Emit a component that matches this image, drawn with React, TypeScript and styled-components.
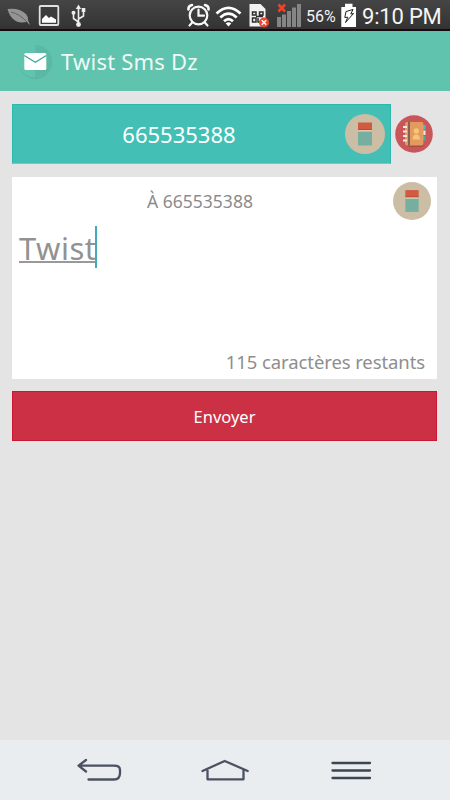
import React from "react";
import styled, { createGlobalStyle } from "styled-components";

const Global = createGlobalStyle`
  * { box-sizing: border-box; }
  body { margin: 0; background: #e4e4e4; font-family: "Noto Sans", sans-serif; }
  svg { display: block; flex: none; }
`;

const Screen = styled.div`
  width: 450px;
  height: 800px;
  display: flex;
  flex-direction: column;
  background: #e4e4e4;
  overflow: hidden;
`;

const Text = styled.span<{ $size: number; $color: string; $spacing?: number; $font?: string }>`
  font-family: ${(p) => p.$font ?? '"Noto Sans"'}, sans-serif;
  font-size: ${(p) => p.$size}px;
  line-height: 1.2;
  color: ${(p) => p.$color};
  letter-spacing: ${(p) => p.$spacing ?? 0}px;
  white-space: nowrap;
`;

const StatusBar = styled.header`
  height: 31px;
  flex: none;
  display: flex;
  align-items: center;
  background: linear-gradient(#454545, #333 94%, #160c0f 95%);
`;

const Notifications = styled.div`
  width: 187px;
  flex: none;
`;

const Clock = styled.div`
  margin-left: 6px;
  padding-top: 3px;
  display: flex;
`;

const Percent = styled.div`
  width: 35px;
  padding-top: 2px;
  display: flex;
`;

const AppBar = styled.div`
  height: 60px;
  flex: none;
  display: flex;
  align-items: center;
  padding: 1px 0 0 17px;
  gap: 8px;
  background: #60c3ae;
`;

const Content = styled.main`
  flex: 1;
  padding: 13px 13px 0 12px;
  display: flex;
  flex-direction: column;
`;

const RecipientRow = styled.div`
  display: flex;
  align-items: center;
  gap: 4.3px;
`;

const Recipient = styled.div`
  width: 379px;
  height: 60px;
  display: grid;
  grid-template-columns: 1fr 40px;
  align-items: center;
  padding: 0 5px 0 0;
  background: #43bfb5;
  border: 1px solid #2bb9ae;
  border-bottom-color: #71cac3;
`;

const Centered = styled.div<{ $right?: number; $top?: number }>`
  display: flex;
  justify-content: center;
  padding-right: ${(p) => p.$right ?? 0}px;
  padding-top: ${(p) => p.$top ?? 0}px;
`;

const Message = styled.section`
  height: 202px;
  margin-top: 12.5px;
  padding: 5px 6px 5px 7px;
  display: flex;
  flex-direction: column;
  background: #fff;
`;

const MessageHead = styled.div`
  display: grid;
  grid-template-columns: 1fr 38px;
  align-items: center;
  height: 38px;
`;

const Editor = styled.div`
  flex: 1;
  display: flex;
  align-items: flex-start;
  padding-top: 6px;
`;

const Draft = styled.div`
  height: 37px;
  width: 76px;
  display: flex;
  align-items: center;
  padding-top: 11px;
  border-bottom: 2px solid #999;
`;

const Caret = styled.div`
  width: 2px;
  height: 42px;
  background: #45a9bd;
`;

const Counter = styled.div`
  display: flex;
  justify-content: flex-end;
  padding-right: 6px;
`;

const Send = styled.button`
  height: 50px;
  margin: 12.5px 0 0;
  padding: 2px 0 0;
  border: 1px solid #cc1733;
  background: #cc3044;
`;

const NavBar = styled.nav`
  height: 60px;
  flex: none;
  background: #e9edf0;
`;

const NotificationIcons = () => (
  <svg width="187" height="31" viewBox="0 0 187 31">
    <path d="M7.500 9 Q19 7.500 26 14 Q28.500 17 28 20 L30 25 L26.500 22 Q12 25 7.500 9Z" fill="#949494" />
    <path d="M11 12 Q20 14 28 23" stroke="#555" fill="none" strokeWidth=".8" />
    <rect x="39.700" y="6" width="18.600" height="19" rx="1" fill="#3c3c3c" stroke="#e4e0e0" strokeWidth="1.800" />
    <path d="M42 22.700 V19 L46 15 L49 18 L51 16.500 L56 19.500 V22.700Z" fill="#fff" />
    <g stroke="#eee" strokeWidth="1.600" fill="none">
      <path d="M78.500 25 V8 M78.500 22 L73.500 18.500 V13 M78.500 19 L83.500 16 V11" />
    </g>
    <g fill="#eee">
      <path d="M78.500 4.500 L81.200 9 H75.800Z" />
      <circle cx="78.500" cy="24.500" r="2.400" />
      <circle cx="73.500" cy="12.700" r="2" />
      <rect x="81.700" y="8" width="3.600" height="4" />
    </g>
  </svg>
);

const SignalIcons = () => (
  <svg width="119" height="31" viewBox="187 0 119 31">
    <g fill="none" stroke="#f8f8f8" strokeWidth="2.200" strokeLinecap="round">
      <circle cx="198.500" cy="15.500" r="8.800" />
      <path d="M198.500 9.500 V15.700 H204 M192 22.800 L189.500 25.500 M205 22.800 L207.500 25.500" />
      <path d="M188.500 9.500 Q188 6 192 5 M208.500 9.500 Q209 6 205 5" strokeWidth="2.600" />
    </g>
    <g fill="none" stroke="#fff" strokeWidth="2.700">
      <path d="M216.500 13.500 Q228.500 2.300 240.500 13.500" />
      <path d="M220.300 17.500 Q228.500 9.800 236.700 17.500" />
      <path d="M224 21.200 Q228.500 17 233 21.200" />
    </g>
    <path d="M225.700 23.500 Q228.500 21 231.300 23.500 L228.500 26.500Z" fill="#fff" />
    <path d="M249.500 4 H260.500 L265.500 9 V26.500 H249.500Z" fill="#f2f2f2" />
    <path d="M252.500 12 H256 V15 H252.500Z M259.500 12 H263 V15 H259.500Z M252.500 18 H256 V22 H252.500Z M256 16.500 H263 M258 18 V22 H260" fill="none" stroke="#2d2d2d" strokeWidth="1.500" />
    <circle cx="264" cy="22.500" r="5" fill="#ef452c" />
    <path d="M261.800 20.300 L266.200 24.700 M266.200 20.300 L261.800 24.700" stroke="#fff" strokeWidth="1.500" />
    <path d="M277 17 H281 V27 H277Z M282 14.500 H286 V27 H282Z M287 11 H291 V27 H287Z M292 7.500 H296 V27 H292Z M297 4 H301 V27 H297Z" fill="#858585" />
    <path d="M278.500 4.500 L285 11.500 M285 4.500 L278.500 11.500" stroke="#f04427" strokeWidth="2.600" />
  </svg>
);

const BatteryIcon = () => (
  <svg width="15" height="31" viewBox="341 0 15 31">
    <path d="M341.300 7 H345 V3.800 H352.500 V7 H356 V27 H341.300Z" fill="#fff" />
    <path d="M346 11.500 L353 9.500 L350.800 14 L353.500 13.500 L345.500 22.500 L347.800 17.200 L344.800 17.500Z" fill="none" stroke="#222" strokeWidth="1" />
  </svg>
);

const MailIcon = () => (
  <svg width="36" height="36" viewBox="0 0 36 36">
    <circle cx="18.300" cy="18.300" r="16.600" fill="#4d9f90" opacity=".35" />
    <circle cx="18.200" cy="17.200" r="16.600" fill="#60c3ae" />
    <path d="M18.300 1 A16.800 16.800 0 0 1 18.300 34.600Z" fill="#5ab8a4" />
    <rect x="7.300" y="9" width="22" height="17" rx="1.500" fill="#fff" />
    <path d="M7.300 11.500 L18.300 18.200 L29.300 11.500" fill="none" stroke="#36ac98" strokeWidth="1.300" />
  </svg>
);

const EraserIcon = ({ size }: { size: number }) => (
  <svg width={size} height={size} viewBox="0 0 40 40">
    <circle cx="20" cy="20" r="20" fill="#ccbea5" />
    <rect x="13" y="8.500" width="14" height="8" fill="#cf5b40" />
    <rect x="13" y="15.500" width="14" height="1" fill="#b93815" />
    <rect x="13" y="16.300" width="14" height="1.200" fill="#f5eddb" />
    <rect x="13" y="17.500" width="14" height="14" fill="#76af9f" />
  </svg>
);

const ContactsIcon = () => (
  <svg width="38" height="38" viewBox="0 0 38 38">
    <circle cx="19" cy="19" r="18.800" fill="#c95759" />
    <path d="M11 30 L14 32 H27.500 L29 29 V9Z" fill="#a84c4b" />
    <rect x="27" y="10" width="3.500" height="4.500" fill="#4eb7ce" />
    <rect x="27" y="15.500" width="3.500" height="4.500" fill="#f2e7dc" />
    <rect x="27" y="21" width="3.500" height="4.500" fill="#52a999" />
    <rect x="10" y="7" width="18.500" height="23.500" rx="2" fill="#e39a5c" />
    <rect x="13.300" y="7" width="1.400" height="23.500" fill="#5a495a" />
    <path d="M8 12 H12 M8 16.500 H12 M8 21 H12 M8 25.500 H12" stroke="#f5eadb" strokeWidth="2" />
    <circle cx="21.300" cy="16" r="2.700" fill="#f6c579" />
    <path d="M17.700 24.500 Q17.700 19.500 21.300 19.500 Q25 19.500 25 24.500Z" fill="#f6c579" />
  </svg>
);

const NavIcons = () => (
  <svg width="450" height="60" viewBox="0 0 450 60" fill="none" stroke="#4b5160" strokeWidth="2.300" strokeLinecap="round" strokeLinejoin="round">
    <path d="M86 20 L78.500 25.700 L86 31.500 M79 25.700 H114 Q120 25.700 120 30 V33 Q120 39.500 114 39.500 H88.500" />
    <path d="M202.500 31 L224.700 21 L247.700 31 M207.500 30 V39.300 H243.500 V30" />
    <path d="M332.500 23 H370 M332.500 30.500 H370 M332.500 38 H370" stroke="#3d4452" />
  </svg>
);

export default function App() {
  return (
    <>
      <Global />
      <Screen>
        <StatusBar>
          <Notifications><NotificationIcons /></Notifications>
          <SignalIcons />
          <Percent><Text $font="Roboto" $size={16} $color="#f2f2f2">56%</Text></Percent>
          <BatteryIcon />
          <Clock><Text $font="Roboto" $size={22} $spacing={-0.2} $color="#f5f5f5">9:10 PM</Text></Clock>
        </StatusBar>
        <AppBar>
          <MailIcon />
          <Text $size={22} $color="#effaf7" $spacing={0.22}>Twist Sms Dz</Text>
        </AppBar>
        <Content>
          <RecipientRow>
            <Recipient>
              <Centered><Text $size={22} $color="#fff">665535388</Text></Centered>
              <EraserIcon size={40} />
            </Recipient>
            <ContactsIcon />
          </RecipientRow>
          <Message>
            <MessageHead>
              <Centered $right={12} $top={2}><Text $size={17.5} $color="#8b8b8b">À 665535388</Text></Centered>
              <EraserIcon size={38} />
            </MessageHead>
            <Editor>
              <Draft><Text $size={31} $color="#929292" $spacing={0.5}>Twist</Text></Draft>
              <Caret />
            </Editor>
            <Counter><Text $size={18.5} $color="#8e8e8e" $spacing={-0.1}>115 caractères restants</Text></Counter>
          </Message>
          <Send><Text $size={16.5} $color="#fff">Envoyer</Text></Send>
        </Content>
        <NavBar><NavIcons /></NavBar>
      </Screen>
    </>
  );
}
